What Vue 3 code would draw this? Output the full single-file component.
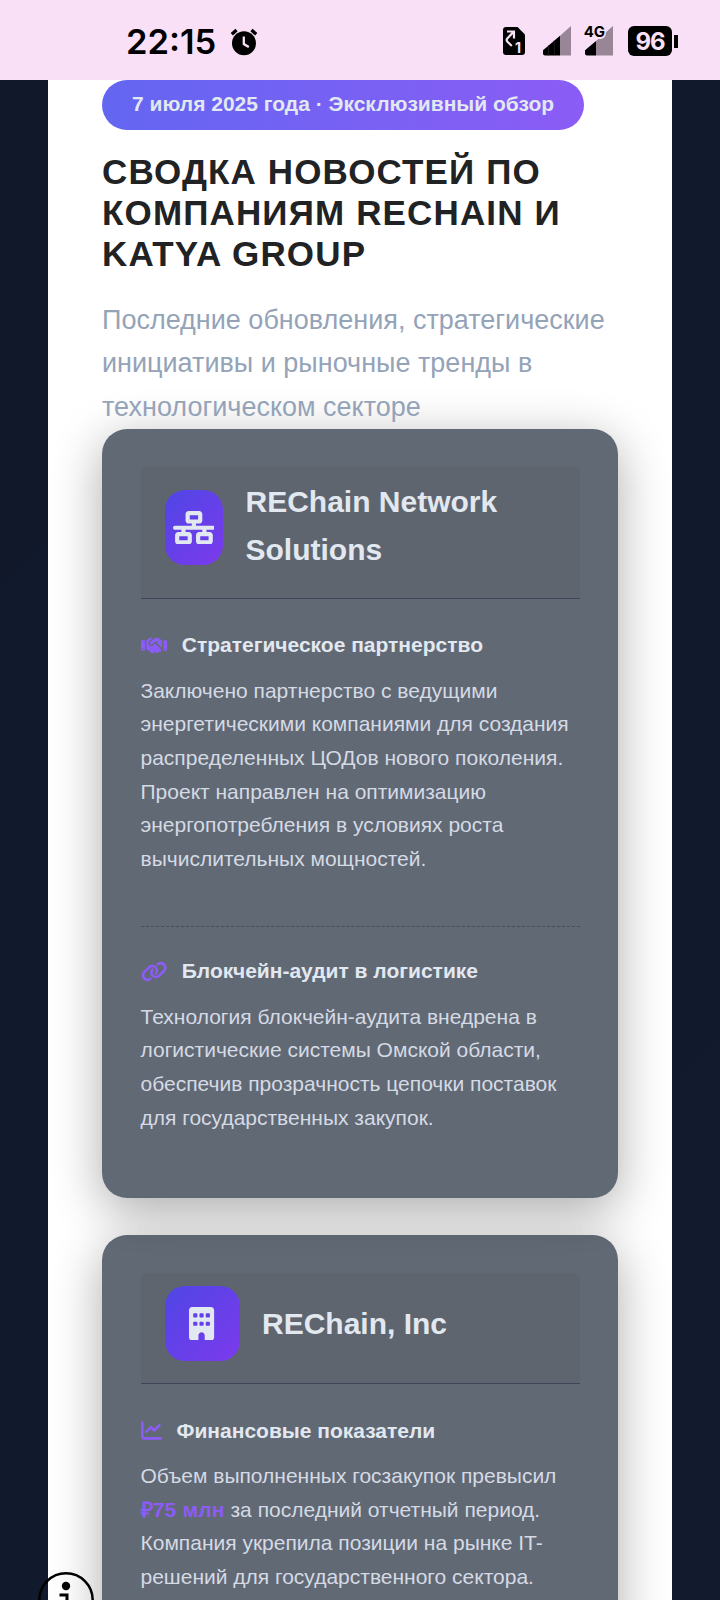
<script setup>
const icons = {
  network: {
    box: '0 0 640 512',
    d: 'M256 64H384v64H256V64zM240 0c-26.5 0-48 21.5-48 48v96c0 26.5 21.5 48 48 48h48v32H32c-17.7 0-32 14.3-32 32s14.3 32 32 32h96v32H80c-26.5 0-48 21.5-48 48v96c0 26.5 21.5 48 48 48H240c26.5 0 48-21.5 48-48V368c0-26.5-21.5-48-48-48H192V288H448v32H400c-26.5 0-48 21.5-48 48v96c0 26.5 21.5 48 48 48H560c26.5 0 48-21.5 48-48V368c0-26.5-21.5-48-48-48H512V288h96c17.7 0 32-14.3 32-32s-14.3-32-32-32H352V192h48c26.5 0 48-21.5 48-48V48c0-26.5-21.5-48-48-48H240zM96 448V384H224v64H96zm320-64H544v64H416V384z',
  },
  building: {
    box: '0 0 384 512',
    d: 'M48 0C21.5 0 0 21.5 0 48V464c0 26.5 21.5 48 48 48h96V432c0-26.5 21.5-48 48-48s48 21.5 48 48v80h96c26.5 0 48-21.5 48-48V48c0-26.5-21.5-48-48-48H48zM64 240c0-8.8 7.2-16 16-16h32c8.8 0 16 7.2 16 16v32c0 8.8-7.2 16-16 16H80c-8.8 0-16-7.2-16-16V240zm112-16h32c8.8 0 16 7.2 16 16v32c0 8.8-7.2 16-16 16H176c-8.8 0-16-7.2-16-16V240c0-8.8 7.2-16 16-16zm80 16c0-8.8 7.2-16 16-16h32c8.8 0 16 7.2 16 16v32c0 8.8-7.2 16-16 16H272c-8.8 0-16-7.2-16-16V240zM80 96h32c8.8 0 16 7.2 16 16v32c0 8.8-7.2 16-16 16H80c-8.8 0-16-7.2-16-16V112c0-8.8 7.2-16 16-16zm80 16c0-8.8 7.2-16 16-16h32c8.8 0 16 7.2 16 16v32c0 8.8-7.2 16-16 16H176c-8.8 0-16-7.2-16-16V112zM272 96h32c8.8 0 16 7.2 16 16v32c0 8.8-7.2 16-16 16H272c-8.8 0-16-7.2-16-16V112c0-8.8 7.2-16 16-16z',
  },
  handshake: {
    box: '0 0 640 512',
    d: 'M323.4 85.2l-96.8 78.4c-16.1 13-19.2 36.4-7 53.1c12.9 17.8 38 21.3 55.3 7.8l99.3-77.2c7-5.4 17-4.2 22.5 2.8s4.2 17-2.8 22.5l-20.9 16.2L512 316.8V128h-.7l-3.9-2.5L434.8 79c-15.3-9.8-33.2-15-51.4-15c-21.8 0-43 7.5-60 21.2zm22.8 124.4l-51.7 40.2C263 274.3 217.3 268 193.7 235.6c-22.2-30.5-16.6-73.1 12.7-96.8l83.2-67.3c-11.6-4.9-24.1-7.4-36.8-7.4C234 64 215.7 69.6 200 80l-72 48V352h28.2l91.4 83.4c19.6 17.9 49.9 16.5 67.8-3.1c5.5-6.1 9.2-13.2 11.1-20.6l17 15.6c19.5 17.9 49.9 16.6 67.8-2.9c4.5-4.9 7.8-10.6 9.9-16.5c19.4 13 45.8 10.3 62.1-7.5c17.9-19.5 16.6-49.9-2.9-67.8l-134.2-123zM16 128c-8.8 0-16 7.2-16 16V352c0 17.7 14.3 32 32 32H64c17.7 0 32-14.3 32-32V128H16zM48 320a16 16 0 1 1 0 32 16 16 0 1 1 0-32zM544 128V352c0 17.7 14.3 32 32 32h32c17.7 0 32-14.3 32-32V144c0-8.8-7.2-16-16-16H544zm32 208a16 16 0 1 1 32 0 16 16 0 1 1 -32 0z',
  },
  link: {
    box: '0 0 640 512',
    d: 'M579.8 267.7c56.5-56.5 56.5-148 0-204.5c-50-50-128.8-56.5-186.3-15.4l-1.6 1.1c-14.4 10.3-17.7 30.3-7.4 44.6s30.3 17.7 44.6 7.4l1.6-1.1c32.1-22.9 76-19.3 103.8 8.6c31.5 31.5 31.5 82.5 0 114L422.3 334.8c-31.5 31.5-82.5 31.5-114 0c-27.9-27.9-31.5-71.8-8.6-103.8l1.1-1.6c10.3-14.4 6.9-34.4-7.4-44.6s-34.4-6.9-44.6 7.4l-1.1 1.6C206.5 251.2 213 330 263 380c56.5 56.5 148 56.5 204.5 0L579.8 267.7zM60.2 244.3c-56.5 56.5-56.5 148 0 204.5c50 50 128.8 56.5 186.3 15.4l1.6-1.1c14.4-10.3 17.7-30.3 7.4-44.6s-30.3-17.7-44.6-7.4l-1.6 1.1c-32.1 22.9-76 19.3-103.8-8.6C74 372 74 321 105.5 289.5L217.7 177.2c31.5-31.5 82.5-31.5 114 0c27.9 27.9 31.5 71.8 8.6 103.9l-1.1 1.6c-10.3 14.4-6.9 34.4 7.4 44.6s34.4 6.9 44.6-7.4l1.1-1.6C433.5 260.8 427 182 377 132c-56.5-56.5-148-56.5-204.5 0L60.2 244.3z',
  },
  chart: {
    box: '0 0 512 512',
    d: 'M64 64c0-17.7-14.3-32-32-32S0 46.3 0 64V400c0 44.2 35.8 80 80 80H480c17.7 0 32-14.3 32-32s-14.3-32-32-32H80c-8.8 0-16-7.2-16-16V64zm406.6 86.6c12.5-12.5 12.5-32.8 0-45.3s-32.8-12.5-45.3 0L320 210.7l-57.4-57.4c-12.5-12.5-32.8-12.5-45.3 0l-112 112c-12.5 12.5-12.5 32.8 0 45.3s32.8 12.5 45.3 0L240 221.3l57.4 57.4c12.5 12.5 32.8 12.5 45.3 0l128-128z',
  },
}

const companies = [
  {
    icon: 'network',
    narrow: true,
    name: ['REChain Network', 'Solutions'],
    items: [
      {
        icon: 'handshake',
        title: 'Стратегическое партнерство',
        lines: [
          'Заключено партнерство с ведущими',
          'энергетическими компаниями для создания',
          'распределенных ЦОДов нового поколения.',
          'Проект направлен на оптимизацию',
          'энергопотребления в условиях роста',
          'вычислительных мощностей.',
        ],
      },
      {
        icon: 'link',
        title: 'Блокчейн-аудит в логистике',
        lines: [
          'Технология блокчейн-аудита внедрена в',
          'логистические системы Омской области,',
          'обеспечив прозрачность цепочки поставок',
          'для государственных закупок.',
        ],
      },
    ],
  },
  {
    icon: 'building',
    name: ['REChain, Inc'],
    items: [
      {
        icon: 'chart',
        title: 'Финансовые показатели',
        lines: [
          'Объем выполненных госзакупок превысил',
          { strong: '₽75 млн', rest: ' за последний отчетный период.' },
          'Компания укрепила позиции на рынке IT-',
          'решений для государственного сектора.',
        ],
      },
    ],
  },
]
</script>

<template>
  <div class="screen">
    <header class="status">
      <span class="time">22:15</span>
      <svg class="alarm" width="28" height="28" viewBox="0 0 28 28">
        <circle cx="14" cy="15.3" r="12" />
        <path d="M1.800 6.200L6.500 2M26.200 6.200L21.500 2" stroke="#000" stroke-width="3.400" />
        <path d="M13.800 8.600V16l5 3" fill="none" stroke="#f9e0f7" stroke-width="2.300" />
      </svg>
      <div class="indicators">
        <svg class="sim" width="22" height="28" viewBox="0 0 22 28">
          <path d="M3 0h11.500L22 7.500V25a3 3 0 0 1-3 3H3a3 3 0 0 1-3-3V3a3 3 0 0 1 3-3z" />
          <path d="M4 4.500h7v7M10.500 5L4.500 11.200a2.600 2.600 0 0 0 0 3.600l4.300 4.200" fill="none" stroke="#f9e0f7" stroke-width="2.200" />
          <text x="12" y="25.500" class="sim-no">1</text>
        </svg>
        <svg class="signal" width="28" height="30" viewBox="0 0 28 30">
          <path d="M28 0v29.500H17V9.800z" fill="#988696" />
          <path d="M17 9.800v19.700H2a2 2 0 0 1-2-2v-3.300z" />
          <path d="M5.500 19v10.500M11.300 14v15.500" stroke="#33302f" stroke-width=".6" />
        </svg>
        <svg class="signal second" width="32" height="30" viewBox="-4 0 32 30">
          <path d="M28 0v29.500H11V15z" fill="#988696" />
          <path d="M11 15v14.500H2a2 2 0 0 1-2-2v-3.300z" />
          <path d="M-4 0h25v6q0 7-6 7H-4z" fill="#f9e0f7" />
          <text x="-1.300" y="11" class="net">4G</text>
        </svg>
        <div class="battery">96</div>
        <span class="nub"></span>
      </div>
    </header>

    <main class="container">
      <div class="badge">7 июля 2025 года · Эксклюзивный обзор</div>
      <h1>СВОДКА НОВОСТЕЙ ПО<br>КОМПАНИЯМ RECHAIN И<br>KATYA GROUP</h1>
      <p class="subtitle">Последние обновления, стратегические<br>инициативы и рыночные тренды в<br>технологическом секторе</p>

      <section v-for="c in companies" :key="c.icon" class="card">
        <div class="card-head" :class="{ tall: c.narrow }">
          <div class="tile" :class="{ narrow: c.narrow }">
            <svg class="tile-icon" :viewBox="icons[c.icon].box"><path :d="icons[c.icon].d" /></svg>
          </div>
          <h2><span v-for="n in c.name" :key="n">{{ n }}</span></h2>
        </div>
        <article v-for="item in c.items" :key="item.title" class="item">
          <h3>
            <svg class="item-icon" :viewBox="icons[item.icon].box"><path :d="icons[item.icon].d" /></svg>
            <span>{{ item.title }}</span>
          </h3>
          <p>
            <span v-for="(line, i) in item.lines" :key="i" class="line">
              <template v-if="line.strong"><strong>{{ line.strong }}</strong>{{ line.rest }}</template>
              <template v-else>{{ line }}</template>
            </span>
          </p>
        </article>
      </section>
    </main>

    <svg class="info" width="56" height="28" viewBox="0 0 56 28">
      <circle cx="28" cy="28" r="26.700" fill="none" stroke="#000" stroke-width="2.500" />
      <circle cx="28" cy="14" r="4.200" />
      <path d="M21.500 23H29V28" fill="none" stroke="#000" stroke-width="3" />
    </svg>
  </div>
</template>

<style>
body {
  margin: 0;
  background: #10192b;
}
</style>

<style scoped>
.screen {
  position: relative;
  width: 720px;
  height: 1600px;
  overflow: hidden;
  background: linear-gradient(135deg, #10182a, #121b2e);
  font-family: "Liberation Sans", Arial, sans-serif;
}
.status {
  position: relative;
  z-index: 2;
  display: flex;
  align-items: center;
  box-sizing: border-box;
  height: 80px;
  padding: 0 42px 0 126px;
  background: #f9e0f7;
  font-family: Inter, sans-serif;
}
.time {
  font-size: 34.500px;
  font-weight: 600;
  line-height: 42px;
  padding-top: 3px;
  width: 104px;
  white-space: nowrap;
}
.alarm {
  flex: none;
  margin-top: 3px;
}
.indicators {
  display: flex;
  align-items: center;
  margin-left: auto;
  padding-top: 2px;
}
.sim {
  margin-right: 18px;
}
.signal {
  margin-right: 14px;
  overflow: visible;
}
.signal.second {
  margin-left: -4px;
  margin-right: 15px;
}
.sim-no {
  font-size: 14px;
  font-weight: 700;
  fill: #f9e0f7;
}
.net {
  font-size: 15px;
  font-weight: 700;
}
.battery {
  width: 44px;
  height: 30px;
  border-radius: 6px;
  background: #000;
  color: #f9e0f7;
  font-size: 24px;
  font-weight: 700;
  letter-spacing: -1px;
  line-height: 32px;
  text-align: center;
}
.nub {
  width: 4px;
  height: 13px;
  margin-left: 2px;
  background: #000;
}
.container {
  box-sizing: border-box;
  width: 624px;
  height: 1520px;
  margin: 0 48px;
  padding: 0 54px;
  background: #fff;
}
.badge {
  width: max-content;
  box-sizing: border-box;
  height: 50px;
  padding: 0 30px;
  border-radius: 25px;
  background: linear-gradient(90deg, #6366f1, #8b5cf6);
  color: #e2e8f0;
  font-size: 21px;
  font-weight: 700;
  line-height: 48px;
  white-space: nowrap;
}
h1 {
  margin: 21px 0 0;
  color: #212224;
  font-size: 35px;
  line-height: 41px;
  letter-spacing: 1.150px;
  white-space: nowrap;
}
.subtitle {
  margin: 25px 0 0;
  color: #94a3b8;
  font-size: 27px;
  line-height: 43.400px;
  height: 130.200px;
  white-space: nowrap;
}
.card {
  box-sizing: border-box;
  margin-bottom: 37.500px;
  padding: 37.500px 38.500px 38.500px;
  border-radius: 25px;
  background: rgba(30, 41, 59, 0.7);
  box-shadow: 0 12.500px 50px rgba(0, 0, 0, 0.33);
}
.card-head {
  display: flex;
  align-items: center;
  gap: 22.500px;
  margin-bottom: 29.500px;
  padding: 13.500px 24px 21.800px;
  border-bottom: 1.250px solid #3d4757;
  border-radius: 5px 5px 0 0;
  background: rgba(70, 65, 60, 0.1);
}
.card-head.tall {
  gap: 23px;
  padding: 12.800px 24px 22.300px;
}
.tall h2 {
  position: relative;
  top: -1.400px;
}
.tile {
  display: flex;
  flex: none;
  align-items: center;
  justify-content: center;
  width: 75px;
  height: 75px;
  border-radius: 20px;
  background: linear-gradient(135deg, #4f46e5, #7c3aed);
}
.tile.narrow {
  width: 58px;
}
.tile-icon {
  height: 33.500px;
  fill: #e2e8f0;
}
h2 {
  margin: 0;
  color: #e2e8f0;
  font-size: 30px;
  line-height: 48px;
  white-space: nowrap;
}
h2 span,
.line {
  display: block;
}
.item {
  padding-bottom: 25px;
}
.item + .item {
  margin-top: 26px;
  padding-top: 26.800px;
  border-top: 1.250px dashed #444e5d;
}
h3 {
  display: flex;
  align-items: center;
  gap: 15px;
  margin: 0 0 12px;
  color: #e2e8f0;
  font-size: 21px;
  line-height: 33.600px;
  white-space: nowrap;
}
.item-icon {
  height: 21px;
  fill: #8b5cf6;
}
p {
  margin: 0;
}
.item p {
  color: #d5dae4;
  font-size: 21px;
  line-height: 33.600px;
  white-space: nowrap;
}
strong {
  color: #8b5cf6;
  letter-spacing: 0.200px;
}
.info {
  position: absolute;
  left: 38px;
  bottom: 0;
  z-index: 3;
}
</style>
